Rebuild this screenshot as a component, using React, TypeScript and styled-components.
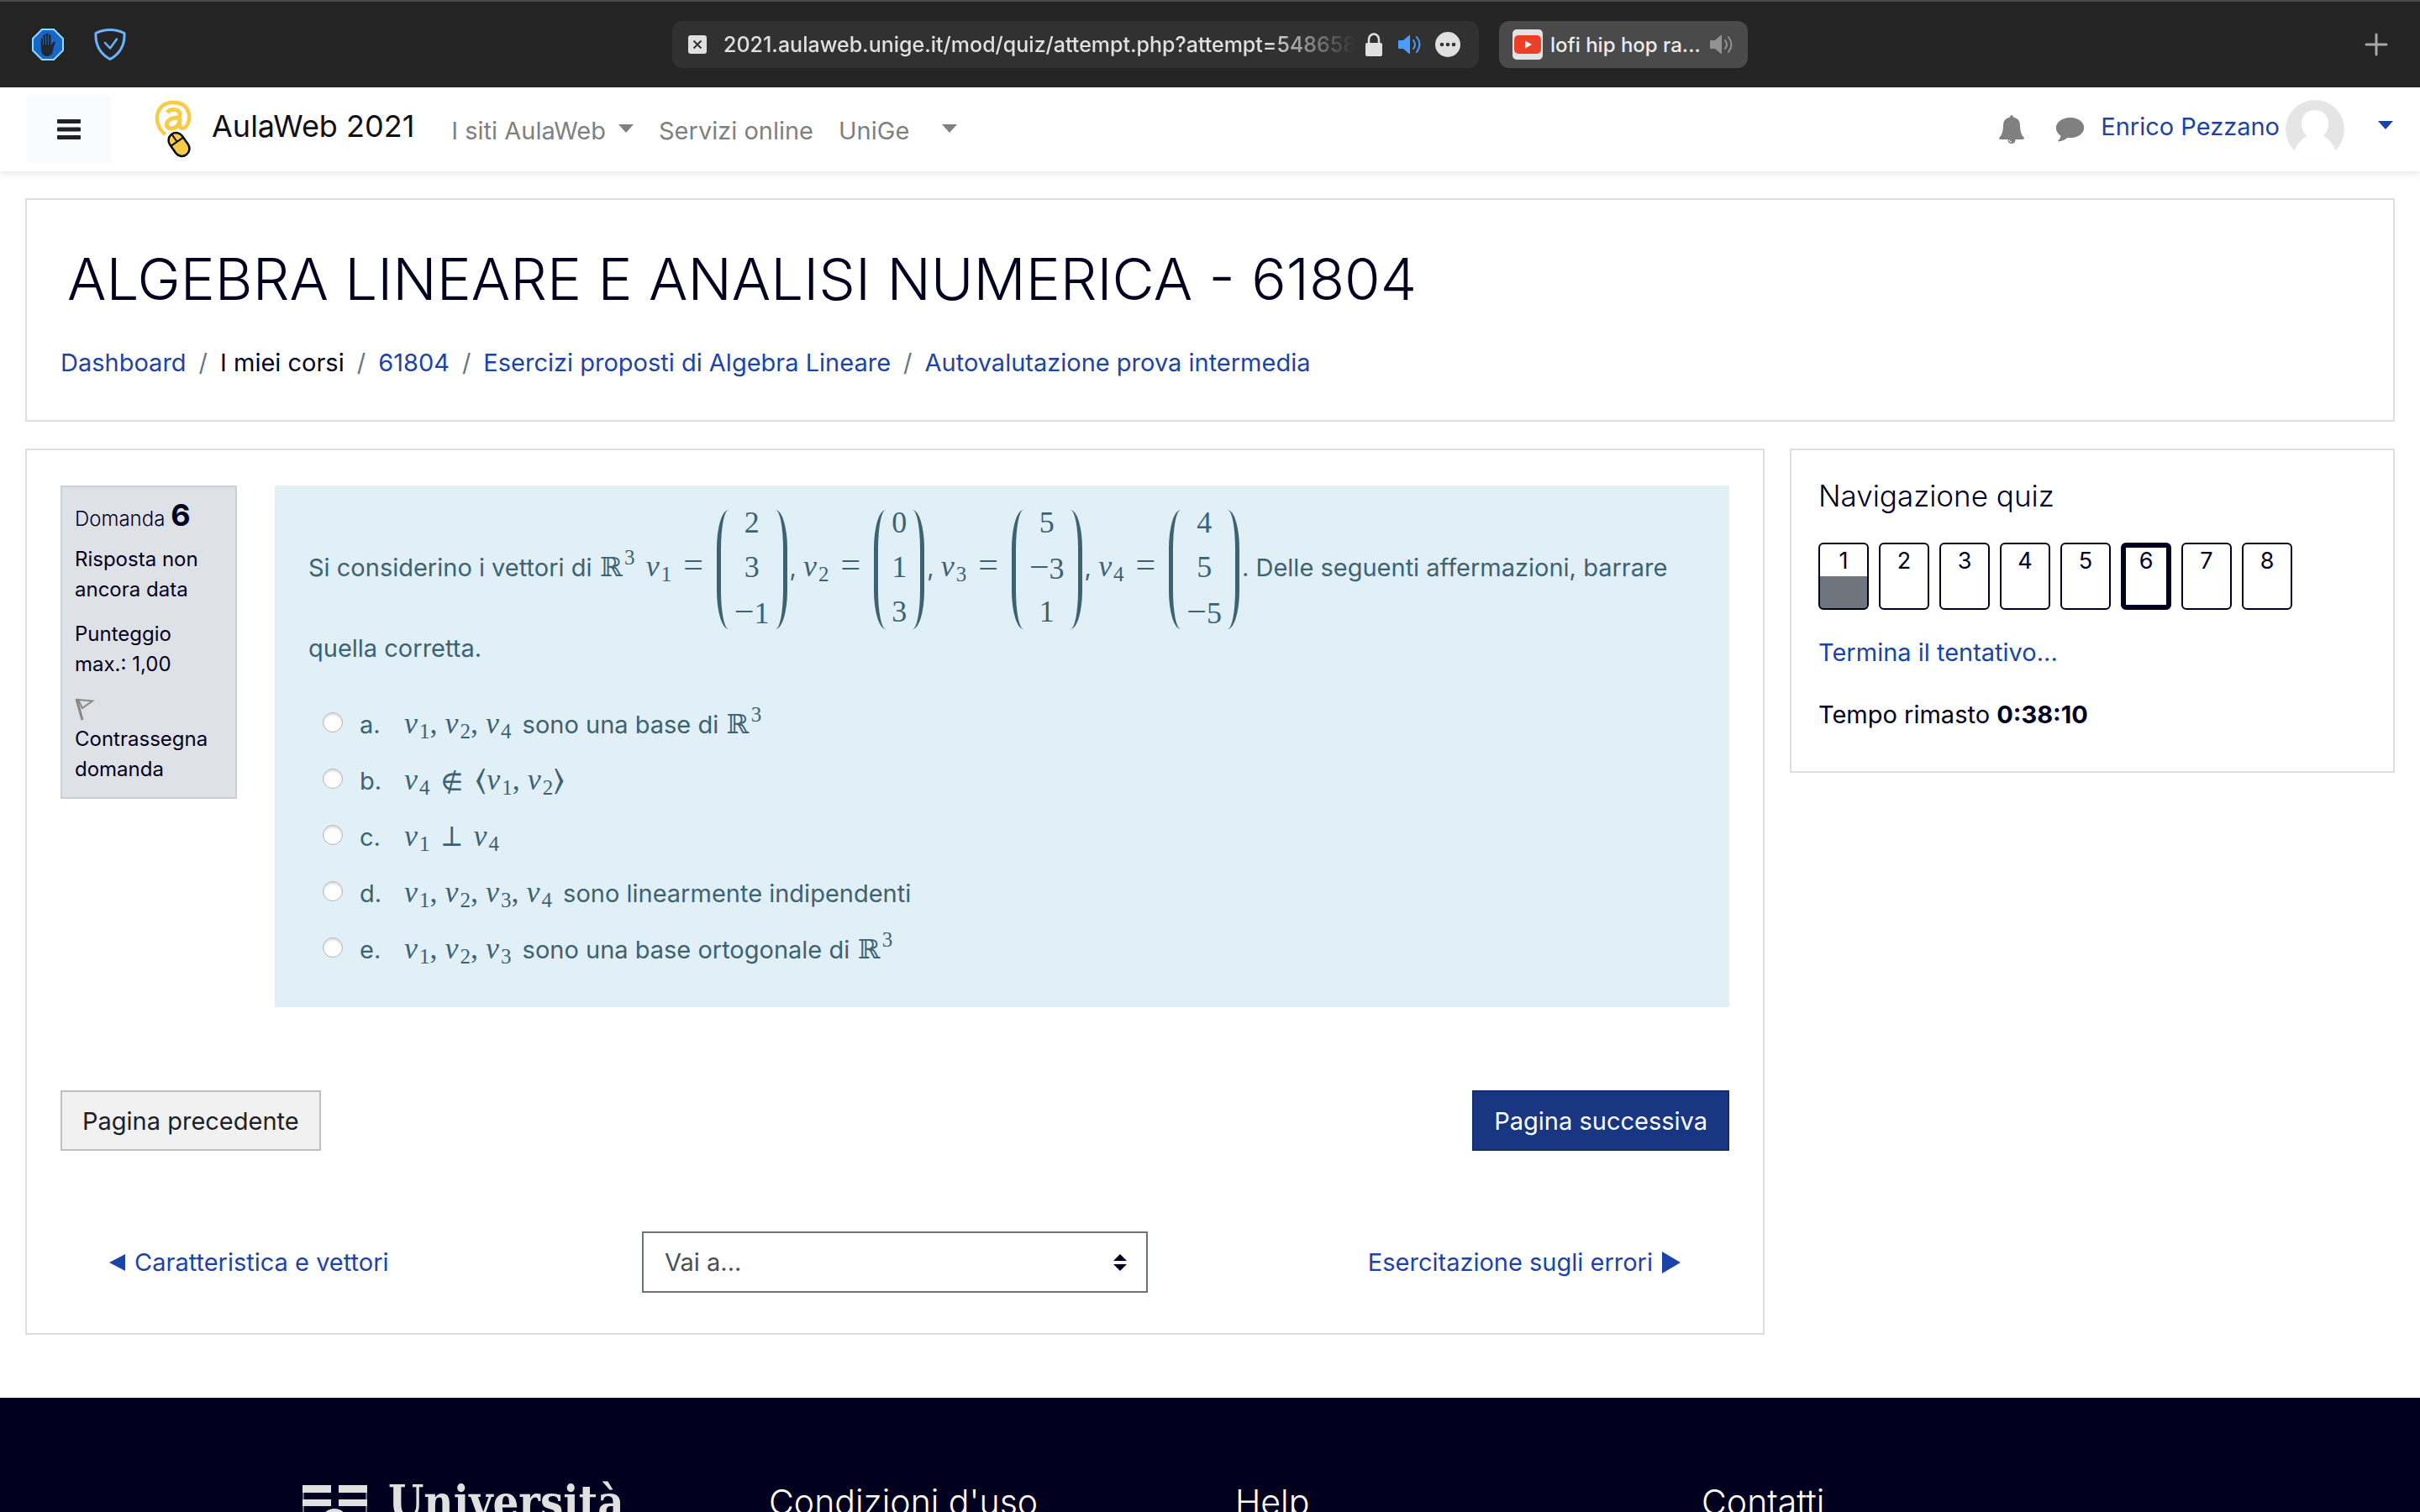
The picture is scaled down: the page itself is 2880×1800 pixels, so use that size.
import React from 'react';
import styled, { createGlobalStyle } from 'styled-components';

const sans = `Inter, "Liberation Sans", sans-serif`;
const serif = `"Liberation Serif", "DejaVu Serif", serif`;
const link = '#1d43a7';
const ink = '#01001e';
const rule = '#dedede';
const infoInk = '#3d6272';

const GlobalStyle = createGlobalStyle`
  *, *::before, *::after { box-sizing: border-box; }
  body { margin: 0; background: #fff; color: ${ink}; font: 400 29px/45px ${sans}; }
  h1, h2, h3, p, ol, ul { margin: 0; padding: 0; font-weight: inherit; font-size: inherit; }
  ol, ul { list-style: none; }
  a { color: ${link}; text-decoration: none; }
  button { font: inherit; border: 0; padding: 0; background: none; cursor: pointer; }
  svg { display: block; flex: none; }
`;

const Page = styled.div`
  height: 100vh;
  display: flex;
  flex-direction: column;
  overflow: hidden;
`;

/* Browser tab strip */
const Chrome = styled.div`
  display: grid;
  grid-template-columns: 1fr auto 1fr;
  align-items: center;
  height: 104px;
  flex: none;
  padding: 0 38px;
  background: #242424;
  border-top: 2px solid #4b4b4b;
`;
const Extensions = styled.div`
  display: flex;
  gap: 36px;
`;
const Tabs = styled.div`
  display: flex;
  gap: 24px;
`;
const Tab = styled.div<{ $active?: boolean }>`
  display: flex;
  align-items: center;
  width: ${p => (p.$active ? 960 : 296)}px;
  height: 56px;
  padding: 0 ${p => (p.$active ? '22px 0 19px' : '18px 0 16px')};
  border-radius: 12px;
  background: ${p => (p.$active ? '#313131' : '#4a4a4a')};
  color: ${p => (p.$active ? '#e0e0e0' : '#ececec')};
  font-size: ${p => (p.$active ? 25 : 24)}px;
  font-weight: 500;
  white-space: nowrap;
`;
const Address = styled.span`
  flex: 1;
  min-width: 0;
  overflow: hidden;
  margin: 0 12px 0 20px;
  mask-image: linear-gradient(to right, #000 86%, transparent 100%);
`;
const TabTitle = styled.span`
  flex: 1;
  margin-left: 9px;
`;
const TabIcons = styled.div`
  display: flex;
  align-items: center;
  gap: 17px;
`;
const NewTab = styled.button`
  justify-self: end;
`;

/* Site navigation */
const Navbar = styled.header`
  position: relative;
  display: flex;
  align-items: center;
  height: 100px;
  flex: none;
  padding: 0 32px;
  background: #fff;
  box-shadow: 0 4px 8px rgba(0, 0, 0, 0.08);
`;
const Toggle = styled.button`
  display: grid;
  place-items: center;
  width: 100px;
  height: 80px;
  background: #fafbfd;
`;
const Brand = styled.a`
  display: flex;
  align-items: center;
  gap: 20px;
  margin-left: 52px;
  color: #101014;
  font-size: 36px;
`;
const Menu = styled.nav`
  display: flex;
  gap: 30px;
  margin-left: 44px;
  padding-top: 3px;
`;
const MenuLink = styled.a<{ $spread?: boolean }>`
  display: flex;
  align-items: center;
  gap: ${p => (p.$spread ? 39 : 15)}px;
  color: #808080;

  & > svg {
    margin-bottom: 6px;
  }
`;
const Account = styled.div`
  display: flex;
  align-items: center;
  margin-left: auto;
`;
const IconButton = styled.button`
  padding-right: 38px;
  color: #808080;
`;
const UserLink = styled.a`
  display: flex;
  align-items: center;
  gap: 7px;
  margin-left: -18px;
`;
const UserName = styled.span`
  padding-bottom: 8px;
`;
const CaretButton = styled.button`
  margin-left: 40px;
  padding-bottom: 10px;
  color: ${link};
`;

/* Page body */
const Body = styled.div`
  flex: none;
  display: grid;
  grid-template-columns: minmax(0, 1fr) 720px;
  align-items: start;
  gap: 32px 30px;
  padding: 32px 30px 75px;
`;
const Card = styled.section`
  border: 2px solid ${rule};
  background: #fff;
`;
const CourseHeader = styled(Card)`
  grid-column: 1 / -1;
  padding: 49px 40px 46px;
`;
const Title = styled.h1`
  padding-left: 8px;
  margin-bottom: 32px;
  font-size: 69px;
  line-height: 90px;
  font-weight: 300;
`;
const Crumbs = styled.ol`
  display: flex;
`;
const Crumb = styled.li`
  & + &::before {
    content: '/';
    padding: 0 15px;
    color: #6c757d;
  }
`;
const Quiz = styled(Card)`
  padding: 42px 40px 48px;
`;
const Question = styled.div`
  display: flex;
  align-items: flex-start;
  gap: 45px;
`;
const Info = styled.aside`
  width: 210px;
  padding: 15px 15px 8px;
  border: 2px solid #cad0d7;
  background: #dee1e6;
  font-size: 24px;
  line-height: 36px;
`;
const InfoTitle = styled.h3`
  font-weight: 300;
  margin-bottom: 12px;
`;
const Number = styled.span`
  font-size: 36px;
  font-weight: 700;
`;
const InfoText = styled.p`
  margin-bottom: 17px;
`;
const FlagButton = styled.button`
  display: block;
  color: inherit;
  text-align: left;
  margin-bottom: 7px;
`;
const Formulation = styled.div`
  flex: 1;
  min-width: 0;
  padding: 29px 40px 35px;
  background: #e1f0f7;
  color: ${infoInk};
`;
const Choices = styled.fieldset`
  border: 0;
  margin: 35px 0 0;
  padding: 0 0 0 17px;
`;
const Choice = styled.label`
  display: flex;
  align-items: center;
  height: 67px;
`;
const Radio = styled.input`
  appearance: none;
  width: 24px;
  height: 24px;
  margin: 0 20px 6px 0;
  border: 1px solid #b5b5b5;
  border-radius: 50%;
  background: #fff;
  box-shadow: inset 0 2px 3px rgba(0, 0, 0, 0.15);
`;
const Letter = styled.span`
  width: 53px;
`;
const MathText = styled.span`
  font-family: ${serif};
  font-size: 36px;
  line-height: 36px;
  white-space: nowrap;
`;
const List = styled(MathText)`
  margin-right: 5px;
`;
const Var = styled.i`
  margin-right: 2px;
`;
const Sub = styled.sub`
  font-size: 25px;
  line-height: 0;
  vertical-align: -6px;
`;
const Sup = styled.sup`
  font-size: 25px;
  line-height: 0;
  vertical-align: 14px;
  margin-right: 5px;
`;
const Real = styled.span`
  font-family: "DejaVu Math TeX Gyre", "DejaVu Sans", sans-serif;
  font-size: 32px;
`;
const Op = styled.span`
  padding: 0 14px;
  font-size: 42px;
`;
const Minus = styled.span`
  font-size: 42px;
`;
const Symbol = styled.span`
  padding: 0 13px;
  font-family: "DejaVu Math TeX Gyre", "DejaVu Sans", sans-serif;
  font-size: 33px;
`;
const Angle = styled.span`
  font-family: "DejaVu Math TeX Gyre", "DejaVu Sans", sans-serif;
  font-size: 36px;
`;
const Matrix = styled.span`
  display: inline-flex;
  vertical-align: middle;
  height: 142px;
  margin: 0 3px 0 2px;
`;
const Entries = styled.span`
  display: grid;
  grid-template-rows: repeat(3, 53px);
  justify-items: center;
  margin: -11px 7px -6px;
  line-height: 53px;
`;
const Delimiter = styled.span<{ $side: 'left' | 'right' }>`
  width: 14px;
  border: 0 solid ${infoInk};
  border-${p => p.$side}-width: 5px;
  border-radius: ${p => (p.$side === 'left' ? '14px 0 0 14px / 46px 0 0 46px' : '0 14px 14px 0 / 0 46px 46px 0')};
`;

const Actions = styled.div`
  display: flex;
  justify-content: space-between;
  margin-top: 99px;
`;
const ActionButton = styled.button<{ $primary?: boolean }>`
  height: 72px;
  padding: 0 24px;
  border: 2px solid ${p => (p.$primary ? '#122b6b' : '#bfbfbf')};
  background: ${p => (p.$primary ? '#183682' : '#f1f1f1')};
  color: ${p => (p.$primary ? '#fff' : '#1d2125')};
`;
const Jump = styled.div`
  display: grid;
  grid-template-columns: 1fr 602px 1fr;
  align-items: center;
  margin-top: 96px;
  padding: 0 58px;
`;
const JumpLink = styled.a<{ $end?: boolean }>`
  display: flex;
  align-items: center;
  gap: 11px;
  justify-self: ${p => (p.$end ? 'end' : 'start')};
`;
const SelectBox = styled.div`
  position: relative;
`;
const Select = styled.select`
  appearance: none;
  display: block;
  width: 100%;
  height: 73px;
  padding: 0 25px;
  border: 2px solid #6f747c;
  border-radius: 0;
  background: #fff;
  color: #495057;
  font: inherit;
`;
const SelectArrows = styled.svg`
  position: absolute;
  right: 25px;
  top: 27px;
  pointer-events: none;
`;

const NavBlock = styled(Card)`
  padding: 27px 32px 45px;
`;
const BlockTitle = styled.h2`
  margin-bottom: 29px;
  font-size: 35px;
  line-height: 54px;
  font-weight: 300;
`;
const Pages = styled.ol`
  display: flex;
  gap: 12px;
  margin-bottom: 28px;
`;
const PageLink = styled.a<{ $current?: boolean; $answered?: boolean }>`
  display: block;
  width: 60px;
  height: 80px;
  border: ${p => (p.$current ? 6 : 2)}px solid ${ink};
  border-radius: 6px;
  background: linear-gradient(#fff 38px, ${p => (p.$answered ? '#6e757c' : '#fff')} 38px);
  color: ${ink};
  font-size: 27px;
  line-height: ${p => (p.$current ? 32 : 40)}px;
  text-align: center;
`;
const Timer = styled.p`
  margin-top: 29px;
`;
const Time = styled.span`
  font-weight: 700;
`;

const Footer = styled.footer`
  flex: 1;
  min-height: 0;
  overflow: hidden;
  background: ${ink};
  color: #fff;
`;
const FooterColumns = styled.div`
  display: grid;
  grid-template-columns: repeat(4, 1fr);
  max-width: 2220px;
  margin: 0 auto;
  padding-top: 94px;
`;
const FooterColumn = styled.div`
  padding: 0 30px;
`;
const FooterTitle = styled.h3`
  font-size: 41px;
  line-height: 60px;
  font-weight: 300;
`;
const University = styled.div`
  display: flex;
  gap: 25px;
  color: #e0e0e0;
  font: 700 54px/60px "DejaVu Serif Condensed", "DejaVu Serif", serif;
`;
const Crest = styled.svg`
  margin-top: 10px;
`;

const Caret = () => (
  <svg width="18" height="10" viewBox="0 0 18 10" fill="currentColor"><path d="M0 0h18L9 10z" /></svg>
);
const Speaker = ({ color }: { color: string }) => (
  <svg width="27" height="24" viewBox="0 0 27 24">
    <path d="M1 7h5l7-6q1-.5 1 .5v21q0 1-1 .5l-7-6H1q-1 0-1-1V8q0-1 1-1z" fill={color} />
    <path d="M18 7q4 5 0 10M22 3q7 9 0 18" fill="none" stroke={color} strokeWidth="2" strokeLinecap="round" />
  </svg>
);
const StopHand = () => (
  <svg width="38" height="38" viewBox="0 0 38 38">
    <path d="M12 1h14l11 11v14L26 37H12L1 26V12z" fill="#1a66c8" stroke="#8edcff" strokeWidth="2" />
    <path d="M11 12q1.500-2 2.500 0V8q1.500-2 3 0V6.500q1.500-2 3 0V8q1.500-2 3 0v12l3-4q2-1 2.500 0-2 5-3 10-1 7-7 7-6 0-7-7-1-7 0-14z" fill="#202832" />
    <path d="M13.500 10v9M16.500 8v11M19.500 8v11" stroke="#1a66c8" />
  </svg>
);
const Shield = () => (
  <svg width="38" height="38" viewBox="0 0 38 38" fill="none" stroke="#69b4ff" strokeLinecap="round" strokeLinejoin="round">
    <path d="M19 1.500q9 0 17 4 1 21-17 31Q1 26.500 2 5.500q8-4 17-4z" strokeWidth="3" />
    <path d="M13 17l6 6.500 8-11" strokeWidth="2.500" />
  </svg>
);
const SiteLogo = () => (
  <svg width="48" height="70" viewBox="0 0 48 70" fill="none">
    <g stroke="#f7cb45">
      <path d="M13 41C-2 31-1 3 22 3c22 0 22 22 15 29-4 3-7 2-7-2V15" strokeWidth="4.500" />
      <path d="M15 15c3-5 15-5 15 2M30 21c-18-1-19 13-10 13 6 0 10-5 10-11" strokeWidth="5" />
    </g>
    <g transform="rotate(-35 29 53)" stroke="#0a0a0a">
      <rect x="20" y="38" width="18" height="30" rx="9" fill="#f7cb45" strokeWidth="2.500" />
      <path d="M20 49h18M29 38v11" strokeWidth="2" />
    </g>
  </svg>
);
const Bell = () => (
  <svg width="30" height="34" viewBox="0 0 30 34" fill="currentColor">
    <path d="M15 0q2 0 2 2.500 8 1.500 8 10 0 10.500 5 14.500 0 2-2 2H2q-2 0-2-2 5-4 5-14.500 0-8.500 8-10Q13 0 15 0zM10.500 29h9q0 5-4.500 5t-4.500-5z" />
    <path d="M12 29.500q.5 2.500 3 2.500" fill="none" stroke="#fff" />
  </svg>
);
const Comment = () => (
  <svg width="33" height="30" viewBox="0 0 33 30" fill="currentColor">
    <path d="M16.500 1C26 1 33 6 33 13s-7 12-16.500 12q-2 0-3-.3Q9 29 2.500 29.500q-.8-.5 0-1.200Q5 26 5.500 22.500 0 19 0 13 0 6 16.500 1z" />
    <ellipse cx="16.500" cy="13" rx="16.500" ry="12" />
  </svg>
);
const Avatar = () => (
  <svg width="70" height="70" viewBox="0 0 70 70">
    <defs><clipPath id="avatarClip"><circle cx="35" cy="35" r="35" /></clipPath></defs>
    <g clipPath="url(#avatarClip)">
      <rect width="70" height="70" fill="#e5e5e5" />
      <path d="M35 12c11 0 16 8 16 16 0 7-3 12-6 15 8 4 12 10 16 21v8H9v-8c4-11 9-17 17-21-4-3-7-8-7-15 0-8 5-16 16-16z" fill="#fff" />
    </g>
  </svg>
);

const V = ({ n }: { n: number }) => (<><Var>v</Var><Sub>{n}</Sub></>);
const VList = ({ of }: { of: number[] }) => (
  <List>{of.map((n, i) => (<React.Fragment key={n}>{i > 0 && ', '}<V n={n} /></React.Fragment>))}</List>
);
const R3 = () => (<MathText><Real>ℝ</Real><Sup>3</Sup></MathText>);
const Vector = ({ n, values }: { n: number; values: number[] }) => (
  <MathText>
    <V n={n} /><Op>=</Op>
    <Matrix>
      <Delimiter $side="left" />
      <Entries>{values.map((v, i) => <span key={i}>{v < 0 && <Minus>−</Minus>}{Math.abs(v)}</span>)}</Entries>
      <Delimiter $side="right" />
    </Matrix>
  </MathText>
);

const choices: [string, React.ReactNode][] = [
  ['a', <><VList of={[1, 2, 4]} /> sono una base di <R3 /></>],
  ['b', <MathText><V n={4} /><Symbol>∉</Symbol><Angle>⟨</Angle><V n={1} />, <V n={2} /><Angle>⟩</Angle></MathText>],
  ['c', <MathText><V n={1} /><Symbol>⊥</Symbol><V n={4} /></MathText>],
  ['d', <><VList of={[1, 2, 3, 4]} /> sono linearmente indipendenti</>],
  ['e', <><VList of={[1, 2, 3]} /> sono una base ortogonale di <R3 /></>],
];

export default function App() {
  return (
    <Page>
      <GlobalStyle />
      <Chrome>
        <Extensions><StopHand /><Shield /></Extensions>
        <Tabs>
          <Tab $active>
            <svg width="22" height="22" viewBox="0 0 22 22">
              <rect width="22" height="22" rx="3" fill="#e0e0e0" />
              <path d="M6.500 6.500l9 9M15.500 6.500l-9 9" stroke="#313131" strokeWidth="2" />
            </svg>
            <Address>2021.aulaweb.unige.it/mod/quiz/attempt.php?attempt=548658</Address>
            <TabIcons>
              <svg width="22" height="28" viewBox="0 0 22 28">
                <rect y="12" width="20" height="16" rx="2" fill="#e0e0e0" />
                <path d="M4 13V8a6 6.500 0 0 1 12 0v5" fill="none" stroke="#e0e0e0" strokeWidth="2.500" />
              </svg>
              <Speaker color="#4a9eff" />
              <svg width="30" height="30" viewBox="0 0 30 30">
                <circle cx="15" cy="15" r="15" fill="#e0e0e0" />
                <g fill="#313131"><circle cx="8" cy="15" r="2.300" /><circle cx="15" cy="15" r="2.300" /><circle cx="22" cy="15" r="2.300" /></g>
              </svg>
            </TabIcons>
          </Tab>
          <Tab>
            <svg width="36" height="36" viewBox="0 0 36 36">
              <rect width="36" height="36" rx="5" fill="#e3e3e3" />
              <rect x="2" y="7" width="32" height="22" rx="5" fill="#eb4025" />
              <path d="M15 13.500v9l8-4.500z" fill="#fff" />
            </svg>
            <TabTitle>lofi hip hop ra...</TabTitle>
            <Speaker color="#929292" />
          </Tab>
        </Tabs>
        <NewTab aria-label="Nuovo pannello">
          <svg width="28" height="28" viewBox="0 0 28 28" stroke="#a8a8a8" strokeWidth="3" strokeLinecap="round"><path d="M14 2v24M2 14h24" /></svg>
        </NewTab>
      </Chrome>

      <Navbar>
        <Toggle aria-label="Pannello laterale">
          <svg width="28" height="24" viewBox="0 0 28 24" fill="#212129"><rect width="28" height="5" rx="1" /><rect y="9.500" width="28" height="5" rx="1" /><rect y="19" width="28" height="5" rx="1" /></svg>
        </Toggle>
        <Brand href="#"><SiteLogo /><UserName>AulaWeb 2021</UserName></Brand>
        <Menu>
          <MenuLink href="#">I siti AulaWeb <Caret /></MenuLink>
          <MenuLink href="#">Servizi online</MenuLink>
          <MenuLink href="#" $spread>UniGe <Caret /></MenuLink>
        </Menu>
        <Account>
          <IconButton aria-label="Notifiche"><Bell /></IconButton>
          <IconButton aria-label="Messaggi"><Comment /></IconButton>
          <UserLink href="#"><UserName>Enrico Pezzano</UserName><Avatar /></UserLink>
          <CaretButton aria-label="Menu utente"><Caret /></CaretButton>
        </Account>
      </Navbar>

      <Body>
        <CourseHeader>
          <Title>ALGEBRA LINEARE E ANALISI NUMERICA - 61804</Title>
          <Crumbs>
            <Crumb><a href="#">Dashboard</a></Crumb>
            <Crumb>I miei corsi</Crumb>
            <Crumb><a href="#">61804</a></Crumb>
            <Crumb><a href="#">Esercizi proposti di Algebra Lineare</a></Crumb>
            <Crumb><a href="#">Autovalutazione prova intermedia</a></Crumb>
          </Crumbs>
        </CourseHeader>

        <Quiz>
          <Question>
            <Info>
              <InfoTitle>Domanda <Number>6</Number></InfoTitle>
              <InfoText>Risposta non ancora data</InfoText>
              <InfoText>Punteggio max.: 1,00</InfoText>
              <FlagButton>
                <svg width="24" height="36" viewBox="0 0 24 36" fill="none" stroke="#888">
                  <path d="M2 6l7 25" strokeWidth="3" />
                  <path d="M4 7l17 1.500L9 17z" strokeWidth="2" />
                </svg>
                Contrassegna domanda
              </FlagButton>
            </Info>
            <Formulation>
              <p>
                Si considerino i vettori di <R3 /> <Vector n={1} values={[2, 3, -1]} />, <Vector n={2} values={[0, 1, 3]} />, <Vector n={3} values={[5, -3, 1]} />, <Vector n={4} values={[4, 5, -5]} />. Delle seguenti affermazioni, barrare quella corretta.
              </p>
              <Choices>
                {choices.map(([letter, text]) => (
                  <Choice key={letter}>
                    <Radio type="radio" name="answer" value={letter} />
                    <Letter>{letter}.</Letter>
                    <span>{text}</span>
                  </Choice>
                ))}
              </Choices>
            </Formulation>
          </Question>
          <Actions>
            <ActionButton>Pagina precedente</ActionButton>
            <ActionButton $primary>Pagina successiva</ActionButton>
          </Actions>
          <Jump>
            <JumpLink href="#">
              <svg width="19" height="20" viewBox="0 0 19 20" fill="currentColor"><path d="M19 0v20L0 10z" /></svg>
              Caratteristica e vettori
            </JumpLink>
            <SelectBox>
              <Select aria-label="Vai a..."><option>Vai a...</option></Select>
              <SelectArrows width="16" height="20" viewBox="0 0 16 20" fill={ink}><path d="M0 8l8-8 8 8zM0 12h16l-8 8z" /></SelectArrows>
            </SelectBox>
            <JumpLink href="#" $end>
              Esercitazione sugli errori
              <svg width="22" height="26" viewBox="0 0 22 26" fill="currentColor"><path d="M0 0v26l22-13z" /></svg>
            </JumpLink>
          </Jump>
        </Quiz>

        <NavBlock>
          <BlockTitle>Navigazione quiz</BlockTitle>
          <Pages>
            {[1, 2, 3, 4, 5, 6, 7, 8].map(n => (
              <li key={n}><PageLink href="#" $answered={n === 1} $current={n === 6}>{n}</PageLink></li>
            ))}
          </Pages>
          <a href="#">Termina il tentativo...</a>
          <Timer>Tempo rimasto <Time>0:38:10</Time></Timer>
        </NavBlock>
      </Body>

      <Footer>
        <FooterColumns>
          <FooterColumn>
            <University>
              <Crest width="77" height="90" viewBox="0 0 77 90">
                <path d="M1 0v90M76 0v90" stroke="#e0e0e0" />
                <g fill="#e0e0e0">
                  <path d="M0 0h34v9H0zM43 0h34v9H43zM0 17h34v8H0zM43 17h34v8H43z" />
                  <circle cx="38" cy="44" r="16" />
                </g>
              </Crest>
              <span>Università</span>
            </University>
          </FooterColumn>
          <FooterColumn><FooterTitle>Condizioni d'uso</FooterTitle></FooterColumn>
          <FooterColumn><FooterTitle>Help</FooterTitle></FooterColumn>
          <FooterColumn><FooterTitle>Contatti</FooterTitle></FooterColumn>
        </FooterColumns>
      </Footer>
    </Page>
  );
}
